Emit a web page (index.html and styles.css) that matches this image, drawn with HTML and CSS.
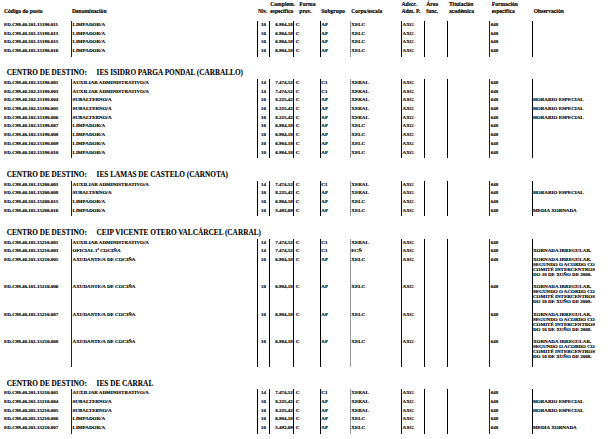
FILE: index.html
```html
<!DOCTYPE html>
<html lang="gl">
<head>
<meta charset="utf-8">
<title>Relación de postos</title>
<link rel="stylesheet" href="styles.css">
</head>
<body>
<div class="page">
  <div class="thead">
    <div class="h hc">Código do posto</div>
    <div class="h hd">Denominación</div>
    <div class="h hn">Niv.</div>
    <div class="h hm">Complem.<br>especifico</div>
    <div class="h hf">Forma<br>prov.</div>
    <div class="h hs">Subgrupo</div>
    <div class="h hk">Corpo/escala</div>
    <div class="h ha">Adscr.<br>Adm. P.</div>
    <div class="h har">Área<br>func.</div>
    <div class="h ht">Titulación<br>académica</div>
    <div class="h hfo">Formación<br>específica</div>
    <div class="h ho">Observación</div>
  </div>

  <div class="tbl">
    <div class="row"><div class="c">ED.C99.40.101.15190.011</div><div class="d">LIMPADOR/A</div><div class="n">10</div><div class="m">6.984,18</div><div class="f">C</div><div class="s">AP</div><div class="k">XELC</div><div class="a">AXG</div><div class="ar"></div><div class="t"></div><div class="fo">648</div><div class="o"></div></div>
    <div class="row"><div class="c">ED.C99.40.101.15190.013</div><div class="d">LIMPADOR/A</div><div class="n">10</div><div class="m">6.984,18</div><div class="f">C</div><div class="s">AP</div><div class="k">XELC</div><div class="a">AXG</div><div class="ar"></div><div class="t"></div><div class="fo">648</div><div class="o"></div></div>
    <div class="row"><div class="c">ED.C99.40.101.15190.015</div><div class="d">LIMPADOR/A</div><div class="n">10</div><div class="m">6.984,18</div><div class="f">C</div><div class="s">AP</div><div class="k">XELC</div><div class="a">AXG</div><div class="ar"></div><div class="t"></div><div class="fo">648</div><div class="o"></div></div>
    <div class="row"><div class="c">ED.C99.40.101.15190.016</div><div class="d">LIMPADOR/A</div><div class="n">10</div><div class="m">6.984,18</div><div class="f">C</div><div class="s">AP</div><div class="k">XELC</div><div class="a">AXG</div><div class="ar"></div><div class="t"></div><div class="fo">648</div><div class="o"></div></div>
  </div>

  <div class="centro"><span class="lbl">CENTRO DE DESTINO:</span><span class="nm">IES ISIDRO PARGA PONDAL (CARBALLO)</span></div>
  <div class="tbl">
    <div class="row"><div class="c">ED.C99.40.102.15190.001</div><div class="d">AUXILIAR ADMINISTRATIVO/A</div><div class="n">14</div><div class="m">7.474,52</div><div class="f">C</div><div class="s">C1</div><div class="k">XERAL</div><div class="a">AXG</div><div class="ar"></div><div class="t"></div><div class="fo">648</div><div class="o"></div></div>
    <div class="row"><div class="c">ED.C99.40.102.15190.003</div><div class="d">AUXILIAR ADMINISTRATIVO/A</div><div class="n">14</div><div class="m">7.474,52</div><div class="f">C</div><div class="s">C1</div><div class="k">XERAL</div><div class="a">AXG</div><div class="ar"></div><div class="t"></div><div class="fo">648</div><div class="o"></div></div>
    <div class="row"><div class="c">ED.C99.40.102.15190.004</div><div class="d">SUBALTERNO/A</div><div class="n">10</div><div class="m">8.225,42</div><div class="f">C</div><div class="s">AP</div><div class="k">XERAL</div><div class="a">AXG</div><div class="ar"></div><div class="t"></div><div class="fo">648</div><div class="o">HORARIO ESPECIAL</div></div>
    <div class="row"><div class="c">ED.C99.40.102.15190.005</div><div class="d">SUBALTERNO/A</div><div class="n">10</div><div class="m">8.225,42</div><div class="f">C</div><div class="s">AP</div><div class="k">XERAL</div><div class="a">AXG</div><div class="ar"></div><div class="t"></div><div class="fo">648</div><div class="o">HORARIO ESPECIAL</div></div>
    <div class="row"><div class="c">ED.C99.40.102.15190.006</div><div class="d">SUBALTERNO/A</div><div class="n">10</div><div class="m">8.225,42</div><div class="f">C</div><div class="s">AP</div><div class="k">XERAL</div><div class="a">AXG</div><div class="ar"></div><div class="t"></div><div class="fo">648</div><div class="o">HORARIO ESPECIAL</div></div>
    <div class="row"><div class="c">ED.C99.40.102.15190.007</div><div class="d">LIMPADOR/A</div><div class="n">10</div><div class="m">6.984,18</div><div class="f">C</div><div class="s">AP</div><div class="k">XELC</div><div class="a">AXG</div><div class="ar"></div><div class="t"></div><div class="fo">648</div><div class="o"></div></div>
    <div class="row"><div class="c">ED.C99.40.102.15190.008</div><div class="d">LIMPADOR/A</div><div class="n">10</div><div class="m">6.984,18</div><div class="f">C</div><div class="s">AP</div><div class="k">XELC</div><div class="a">AXG</div><div class="ar"></div><div class="t"></div><div class="fo">648</div><div class="o"></div></div>
    <div class="row"><div class="c">ED.C99.40.102.15190.009</div><div class="d">LIMPADOR/A</div><div class="n">10</div><div class="m">6.984,18</div><div class="f">C</div><div class="s">AP</div><div class="k">XELC</div><div class="a">AXG</div><div class="ar"></div><div class="t"></div><div class="fo">648</div><div class="o"></div></div>
    <div class="row"><div class="c">ED.C99.40.102.15190.010</div><div class="d">LIMPADOR/A</div><div class="n">10</div><div class="m">6.984,18</div><div class="f">C</div><div class="s">AP</div><div class="k">XELC</div><div class="a">AXG</div><div class="ar"></div><div class="t"></div><div class="fo">648</div><div class="o"></div></div>
  </div>

  <div class="centro"><span class="lbl">CENTRO DE DESTINO:</span><span class="nm">IES LAMAS DE CASTELO (CARNOTA)</span></div>
  <div class="tbl">
    <div class="row"><div class="c">ED.C99.40.101.15200.003</div><div class="d">AUXILIAR ADMINISTRATIVO/A</div><div class="n">14</div><div class="m">7.474,52</div><div class="f">C</div><div class="s">C1</div><div class="k">XERAL</div><div class="a">AXG</div><div class="ar"></div><div class="t"></div><div class="fo">648</div><div class="o"></div></div>
    <div class="row"><div class="c">ED.C99.40.101.15200.008</div><div class="d">SUBALTERNO/A</div><div class="n">10</div><div class="m">8.225,42</div><div class="f">C</div><div class="s">AP</div><div class="k">XERAL</div><div class="a">AXG</div><div class="ar"></div><div class="t"></div><div class="fo">648</div><div class="o">HORARIO ESPECIAL</div></div>
    <div class="row"><div class="c">ED.C99.40.101.15200.015</div><div class="d">LIMPADOR/A</div><div class="n">10</div><div class="m">6.984,18</div><div class="f">C</div><div class="s">AP</div><div class="k">XELC</div><div class="a">AXG</div><div class="ar"></div><div class="t"></div><div class="fo">648</div><div class="o"></div></div>
    <div class="row"><div class="c">ED.C99.40.101.15200.016</div><div class="d">LIMPADOR/A</div><div class="n">10</div><div class="m">3.492,09</div><div class="f">C</div><div class="s">AP</div><div class="k">XELC</div><div class="a">AXG</div><div class="ar"></div><div class="t"></div><div class="fo">648</div><div class="o">MEDIA XORNADA</div></div>
  </div>

  <div class="centro"><span class="lbl">CENTRO DE DESTINO:</span><span class="nm">CEIP VICENTE OTERO VALCÁRCEL (CARRAL)</span></div>
  <div class="tbl">
    <div class="row"><div class="c">ED.C99.40.101.15210.001</div><div class="d">AUXILIAR ADMINISTRATIVO/A</div><div class="n">14</div><div class="m">7.474,52</div><div class="f">C</div><div class="s">C1</div><div class="k">XERAL</div><div class="a">AXG</div><div class="ar"></div><div class="t"></div><div class="fo">648</div><div class="o"></div></div>
    <div class="row"><div class="c">ED.C99.40.101.15210.003</div><div class="d">OFICIAL 1ª COCIÑA</div><div class="n">14</div><div class="m">7.474,52</div><div class="f">C</div><div class="s">C1</div><div class="k">ECÑ</div><div class="a">AXG</div><div class="ar"></div><div class="t"></div><div class="fo">648</div><div class="o">XORNADA IRREGULAR.</div></div>
    <div class="row tall"><div class="c">ED.C99.40.101.15210.005</div><div class="d">AXUDANTE/A DE COCIÑA</div><div class="n">10</div><div class="m">6.984,18</div><div class="f">C</div><div class="s">AP</div><div class="k">XELC</div><div class="a">AXG</div><div class="ar"></div><div class="t"></div><div class="fo">648</div><div class="o">XORNADA IRREGULAR,<br>SEGUNDO O ACORDO CO<br>COMITÉ INTERCENTROS<br>DO 10 DE XUÑO DE 2008.</div></div>
    <div class="row tall"><div class="c">ED.C99.40.101.15210.006</div><div class="d">AXUDANTE/A DE COCIÑA</div><div class="n">10</div><div class="m">6.984,18</div><div class="f">C</div><div class="s">AP</div><div class="k">XELC</div><div class="a">AXG</div><div class="ar"></div><div class="t"></div><div class="fo">648</div><div class="o">XORNADA IRREGULAR,<br>SEGUNDO O ACORDO CO<br>COMITÉ INTERCENTROS<br>DO 10 DE XUÑO DE 2008.</div></div>
    <div class="row tall"><div class="c">ED.C99.40.101.15210.007</div><div class="d">AXUDANTE/A DE COCIÑA</div><div class="n">10</div><div class="m">6.984,18</div><div class="f">C</div><div class="s">AP</div><div class="k">XELC</div><div class="a">AXG</div><div class="ar"></div><div class="t"></div><div class="fo">648</div><div class="o">XORNADA IRREGULAR,<br>SEGUNDO O ACORDO CO<br>COMITÉ INTERCENTROS<br>DO 10 DE XUÑO DE 2008.</div></div>
    <div class="row tall"><div class="c">ED.C99.40.101.15210.008</div><div class="d">AXUDANTE/A DE COCIÑA</div><div class="n">10</div><div class="m">6.984,18</div><div class="f">C</div><div class="s">AP</div><div class="k">XELC</div><div class="a">AXG</div><div class="ar"></div><div class="t"></div><div class="fo">648</div><div class="o">XORNADA IRREGULAR,<br>SEGUNDO O ACORDO CO<br>COMITÉ INTERCENTROS<br>DO 10 DE XUÑO DE 2008.</div></div>
  </div>

  <div class="centro"><span class="lbl">CENTRO DE DESTINO:</span><span class="nm">IES DE CARRAL</span></div>
  <div class="tbl">
    <div class="row"><div class="c">ED.C99.40.201.15210.001</div><div class="d">AUXILIAR ADMINISTRATIVO/A</div><div class="n">14</div><div class="m">7.474,52</div><div class="f">C</div><div class="s">C1</div><div class="k">XERAL</div><div class="a">AXG</div><div class="ar"></div><div class="t"></div><div class="fo">648</div><div class="o"></div></div>
    <div class="row"><div class="c">ED.C99.40.201.15210.004</div><div class="d">SUBALTERNO/A</div><div class="n">10</div><div class="m">8.225,42</div><div class="f">C</div><div class="s">AP</div><div class="k">XERAL</div><div class="a">AXG</div><div class="ar"></div><div class="t"></div><div class="fo">648</div><div class="o">HORARIO ESPECIAL</div></div>
    <div class="row"><div class="c">ED.C99.40.201.15210.005</div><div class="d">SUBALTERNO/A</div><div class="n">10</div><div class="m">8.225,42</div><div class="f">C</div><div class="s">AP</div><div class="k">XERAL</div><div class="a">AXG</div><div class="ar"></div><div class="t"></div><div class="fo">648</div><div class="o">HORARIO ESPECIAL</div></div>
    <div class="row"><div class="c">ED.C99.40.201.15210.006</div><div class="d">LIMPADOR/A</div><div class="n">10</div><div class="m">6.984,18</div><div class="f">C</div><div class="s">AP</div><div class="k">XELC</div><div class="a">AXG</div><div class="ar"></div><div class="t"></div><div class="fo">648</div><div class="o"></div></div>
    <div class="row"><div class="c">ED.C99.40.201.15210.007</div><div class="d">LIMPADOR/A</div><div class="n">10</div><div class="m">3.492,09</div><div class="f">C</div><div class="s">AP</div><div class="k">XELC</div><div class="a">AXG</div><div class="ar"></div><div class="t"></div><div class="fo">648</div><div class="o">MEDIA XORNADA</div></div>
  </div>
</div>
</body>
</html>
```

FILE: styles.css
```css
* { box-sizing: border-box; }
html, body { margin: 0; padding: 0; background: #fff; }
body {
  font-family: "Liberation Serif", "Times New Roman", serif;
  color: #000;
  width: 616px;
  height: 439px;
  overflow: hidden;
}
.page { padding-left: 4px; }

.thead, .row {
  display: grid;
  grid-template-columns: 67px 185.7px 12.6px 24px 26.4px 30px 51.3px 23.3px 22.7px 42.3px 42.4px 1fr;
}

.thead {
  height: 15.7px;
  margin-bottom: 5.3px;
  padding-top: 0.7px;
  font-size: 5.6px;
  line-height: 7.5px;
  font-weight: bold;
  -webkit-text-stroke: 0.15px #000;
}
.h { white-space: nowrap; align-self: end; }
.hd { padding-left: 1px; }
.hn { padding-left: 1.3px; }
.hm { padding-left: 1px; }
.hf { padding-left: 6px; }
.hs { padding-left: 1.5px; }
.hk { padding-left: 1.5px; }
.ha { padding-left: 0.5px; }
.har { padding-left: 2px; }
.ht { padding-left: 2px; }
.hfo { padding-left: 2.5px; }
.ho { padding-left: 2px; }

.row {
  height: 8.7px;
  font-size: 5px;
  line-height: 5px;
  font-weight: bold;
  -webkit-text-stroke: 0.15px #000;
}
.row.tall { height: 27.5px; }
.tbl > .row:last-child { height: 9.7px; }
.tbl > .row.tall:last-child { height: 28.5px; }

.row > div {
  padding-top: 1px;
  white-space: nowrap;
  overflow: visible;
}
.d, .n, .m, .f, .s, .k, .a, .ar, .t, .fo, .o { border-left: 1px solid #000; padding-left: 0.6px; }
.d { border-left-color: #222; }
.k { border-left-color: #999; }
.fo { border-left-color: #222; }
.a { border-left-color: #111; }
.n { text-align: center; padding-left: 0; }
.m { text-align: right; padding-right: 0.6px; padding-left: 0; }
.f { padding-left: 1.4px; }
.o { padding-left: 0.3px; }

.centro {
  padding-top: 11.75px;
  padding-bottom: 1.55px;
  padding-left: 3px;
  font-size: 8.2px;
  line-height: 9px;
  font-weight: bold;
  white-space: nowrap;
  transform: scaleX(0.89);
  transform-origin: left center;
  -webkit-text-stroke: 0.1px #000;
}
.lbl { display: inline-block; width: 101px; }
```
